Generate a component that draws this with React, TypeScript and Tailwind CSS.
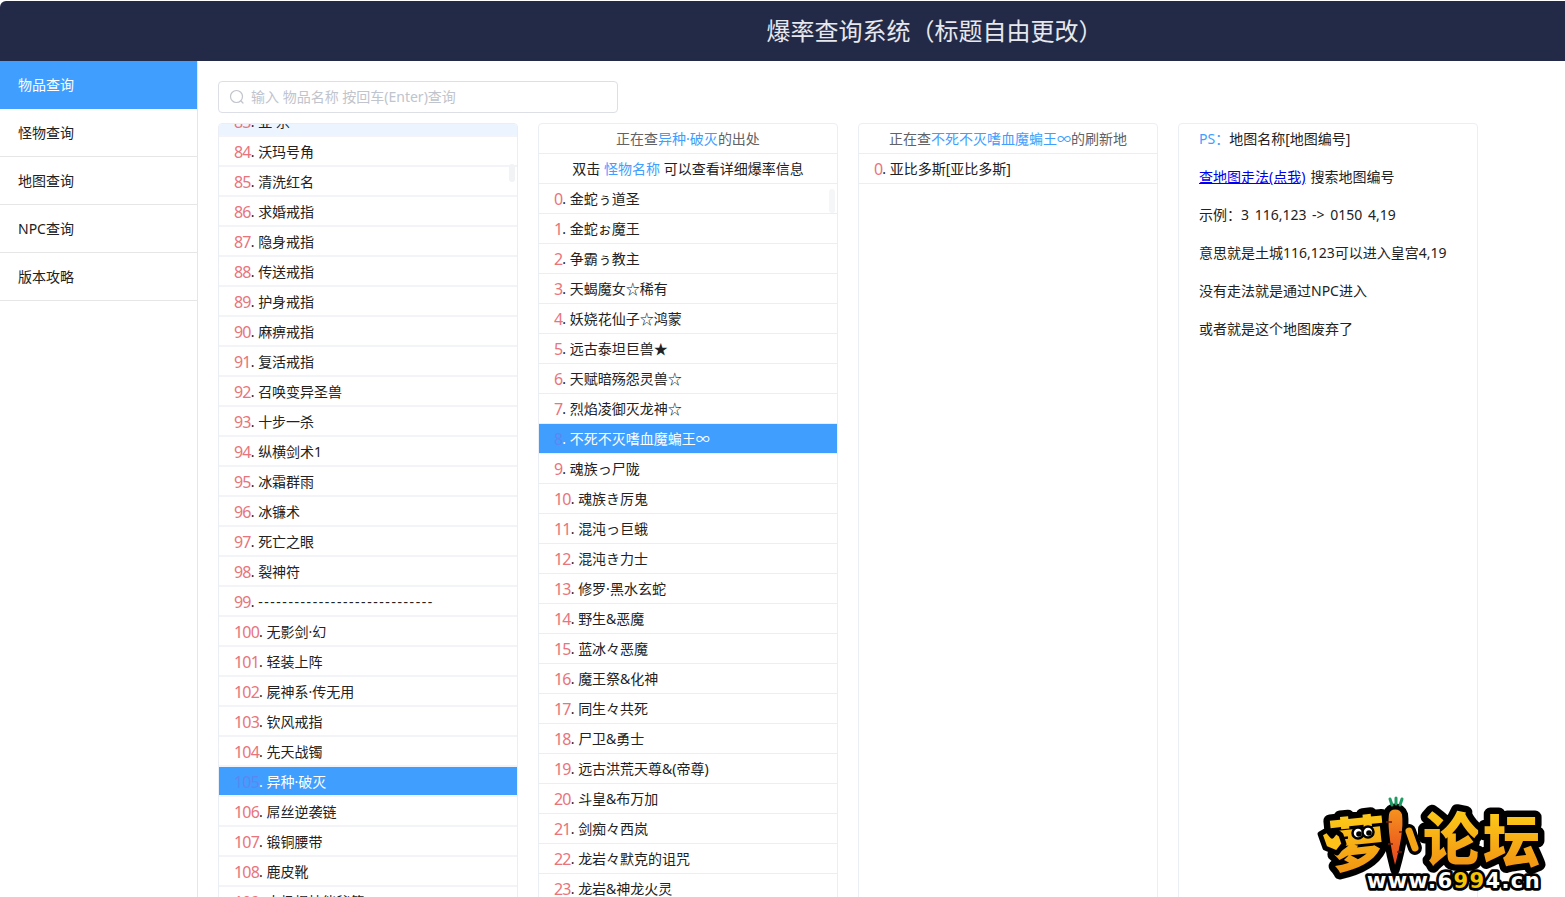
const FONT = "[font-family:'Noto_Sans','Noto_Sans_CJK_SC',sans-serif]";

const NAV = ["物品查询", "怪物查询", "地图查询", "NPC查询", "版本攻略"];

const ITEMS: [number, string][] = [
  [83, "亚·杀"], [84, "沃玛号角"], [85, "清洗红名"], [86, "求婚戒指"], [87, "隐身戒指"], [88, "传送戒指"],
  [89, "护身戒指"], [90, "麻痹戒指"], [91, "复活戒指"], [92, "召唤变异圣兽"], [93, "十步一杀"],
  [94, "纵横剑术1"], [95, "冰霜群雨"], [96, "冰镰术"], [97, "死亡之眼"], [98, "裂神符"],
  [99, "-----------------------------"], [100, "无影剑·幻"], [101, "轻装上阵"], [102, "屍神系·传无用"],
  [103, "钦风戒指"], [104, "先天战镯"], [105, "异种·破灭"], [106, "屌丝逆袭链"], [107, "锻铜腰带"],
  [108, "鹿皮靴"], [109, "太极棍技能秘籍"],
];

const MONSTERS = [
  "金蛇ぅ道圣", "金蛇ぉ魔王", "争霸ぅ教主", "天蝎魔女☆稀有", "妖娆花仙子☆鸿蒙", "远古泰坦巨兽★",
  "天赋暗殇怨灵兽☆", "烈焰凌御灭龙神☆", "不死不灭嗜血魔蝙王∞", "魂族っ尸陇", "魂族き厉鬼", "混沌っ巨蛾",
  "混沌き力士", "修罗·黑水玄蛇", "野生&恶魔", "蓝冰々恶魔", "魔王祭&化神", "同生々共死", "尸卫&勇士",
  "远古洪荒天尊&(帝尊)", "斗皇&布万加", "剑痴々西岚", "龙岩々默克的诅咒", "龙岩&神龙火灵",
];

function Row({ n, label, active, tint, soft }: { n: number; label: string; active?: boolean; tint?: boolean; soft?: boolean }) {
  const dashes = label.startsWith("---");
  return (
    <div
      className={`h-[30px] shrink-0 flex items-center pl-[15px] text-sm leading-none whitespace-nowrap ${
        soft ? "pt-px border-b-2 border-[#f3f4f7]" : "border-b border-[#ebeef5]"
      } ${active ? "bg-[#409eff] text-white" : tint ? "bg-[#ecf5ff] text-[#222]" : "text-[#222]"}`}
    >
      <span className={`text-base tracking-[-0.8px] ${active ? "text-[#5f86f0]" : "text-[#e8747c]"}`}>{n}</span>
      <span>.&nbsp;</span>
      <span className={dashes ? "tracking-[1.55px]" : ""}>{label}</span>
    </div>
  );
}

function Panel({ children }: { children: React.ReactNode }) {
  return (
    <div className="relative w-[300px] h-[800px] shrink-0 border border-[#ebeef5] rounded overflow-hidden bg-white">
      {children}
    </div>
  );
}

function Head({ children }: { children: React.ReactNode }) {
  return (
    <div className="h-[30px] flex items-center justify-center border-b border-[#ebeef5] text-sm text-[#606266] whitespace-nowrap">
      {children}
    </div>
  );
}

function Logo() {
  const glyph = "[font-family:'Noto_Sans_CJK_SC',sans-serif]";
  const site = "[font-family:'DejaVu_Sans',sans-serif]";
  return (
    <svg viewBox="0 0 240 105" className="absolute right-[14px] bottom-[3px] w-[240px] h-[105px]">
      <defs>
        <linearGradient id="gold" x1="0" y1="0" x2="0" y2="1">
          <stop offset="0" stopColor="#ffd91a" />
          <stop offset="1" stopColor="#f08a12" />
        </linearGradient>
        <linearGradient id="carrot" x1="0" y1="0" x2="0" y2="1">
          <stop offset="0" stopColor="#f6961e" />
          <stop offset="1" stopColor="#e53a1e" />
        </linearGradient>
      </defs>
      <g className={glyph} fontWeight="900" strokeLinejoin="round">
        <text x="18" y="76" fontSize="58" fill="url(#gold)" stroke="#000" strokeWidth="13" paintOrder="stroke" transform="rotate(-6 46 50)">萝</text>
        <text x="112" y="71" fontSize="57" fill="url(#gold)" stroke="#000" strokeWidth="13" paintOrder="stroke">论</text>
        <text x="172" y="73" fontSize="57" fill="url(#gold)" stroke="#000" strokeWidth="13" paintOrder="stroke">坛</text>
      </g>
      {/* hand */}
      <path d="M9 45l7-4 5 6 4-5 5 4 3 9-7 9-12-5z" fill="#ffc21a" stroke="#000" strokeWidth="5" strokeLinejoin="round" />
      {/* carrot */}
      <path d="M75 25 C 77 15 91 15 94 25 C 96 40 90 66 86 80 C 85 84 83 84 82 80 C 78 66 73 40 75 25z" fill="url(#carrot)" stroke="#000" strokeWidth="6" />
      <path d="M81 16l-2-6M85 15l0-6M89 16l2-6" stroke="#1f9a62" strokeWidth="3" strokeLinecap="round" />
      <path d="M75 33l6 0M94 43l-6 0M77 55l5 0M91 63l-5 0" stroke="#6d1d08" strokeWidth="1.4" />
      {/* second stroke of 卜 */}
      <path d="M98 42l6 17" stroke="#000" strokeWidth="14" strokeLinecap="round" />
      <path d="M98 42l6 17" stroke="#f5a416" strokeWidth="7" strokeLinecap="round" />
      {/* eyes */}
      <circle cx="47" cy="44" r="5.5" fill="#fff" stroke="#000" strokeWidth="2.5" />
      <circle cx="57" cy="43" r="5.5" fill="#fff" stroke="#000" strokeWidth="2.5" />
      <circle cx="48" cy="45" r="2.8" fill="#000" />
      <circle cx="58" cy="44" r="2.8" fill="#000" />
      {/* address */}
      <text x="56" y="99" fontSize="21" fontWeight="700" letterSpacing="1.4" className={site} fill="#fff" stroke="#000" strokeWidth="5.5" strokeLinejoin="round" paintOrder="stroke">
        www.6<tspan fill="#f5c400">99</tspan>4.cn
      </text>
    </svg>
  );
}

export default function App() {
  return (
    <div className={`relative w-full h-[897px] overflow-hidden bg-white flex flex-col ${FONT}`}>
      <header className="h-[61px] shrink-0 pt-px">
        <div className="h-full bg-[#232a47] rounded-tl-md flex items-center justify-center pl-[304px] text-2xl text-[#e6e8ee]">
          爆率查询系统（标题自由更改）
        </div>
      </header>
      <div className="flex flex-1 min-h-0">
        <nav className="w-[198px] shrink-0 border-r border-[#e6e6e6]">
          {NAV.map((t, i) => (
            <div
              key={t}
              className={`h-12 flex items-center pl-[18px] text-sm ${
                i === 0 ? "bg-[#409eff] text-white" : "border-b border-[#e6e6e6] text-[#222]"
              }`}
            >
              {t}
            </div>
          ))}
        </nav>
        <main className="flex-1 pl-5 pt-5 min-w-0">
          <div className="relative w-[400px] h-8">
            <svg viewBox="0 0 16 16" fill="none" stroke="#c0c4cc" strokeWidth="1.2" className="absolute left-[11px] top-[8px] w-4 h-4">
              <circle cx="7.5" cy="7.5" r="6" />
              <path d="M12 12l2 2" strokeLinecap="round" />
            </svg>
            <input
              readOnly
              placeholder="输入 物品名称 按回车(Enter)查询"
              className="w-full h-full pl-8 pb-0.5 border border-[#dcdfe6] rounded text-sm bg-white outline-none placeholder:text-[#c0c4cc]"
            />
          </div>
          <div className="flex gap-5 mt-2.5">
            <Panel>
              <div className="-mt-[17px]">
                {ITEMS.map(([n, l]) => (
                  <Row key={n} n={n} label={l} active={n === 105} tint={n === 83} soft />
                ))}
              </div>
              <div className="absolute right-[2px] top-[40px] w-[6px] h-[18px] rounded-sm bg-[#f2f3f5]" />
            </Panel>
            <Panel>
              <Head>
                正在查<span className="text-[#409eff]">异种·破灭</span>的出处
              </Head>
              <Head>
                <span className="text-[#222]">
                  双击 <span className="text-[#409eff]">怪物名称</span> 可以查看详细爆率信息
                </span>
              </Head>
              {MONSTERS.map((l, i) => (
                <Row key={l} n={i} label={l} active={i === 8} />
              ))}
              <div className="absolute right-[2px] top-[65px] w-[6px] h-[24px] rounded-sm bg-[#f5f6f7]" />
            </Panel>
            <Panel>
              <Head>
                正在查<span className="text-[#409eff]">不死不灭嗜血魔蝙王∞</span>的刷新地
              </Head>
              <Row n={0} label="亚比多斯[亚比多斯]" />
            </Panel>
            <Panel>
              <div className="pl-5 pt-[3px] flex flex-col gap-[14px] text-sm leading-6 text-[#222]">
                <p>
                  <span className="text-[#409eff]">PS：</span>地图名称[地图编号]
                </p>
                <p>
                  <a href="#" className="text-[#0000ee] underline">查地图走法(点我)</a>
                  <span className="ml-[5px]">搜索地图编号</span>
                </p>
                <p className="[word-spacing:2px]">示例：3 116,123 -&gt; 0150 4,19</p>
                <p>意思就是土城116,123可以进入皇宫4,19</p>
                <p>没有走法就是通过NPC进入</p>
                <p>或者就是这个地图废弃了</p>
              </div>
            </Panel>
          </div>
        </main>
      </div>
      <Logo />
    </div>
  );
}
